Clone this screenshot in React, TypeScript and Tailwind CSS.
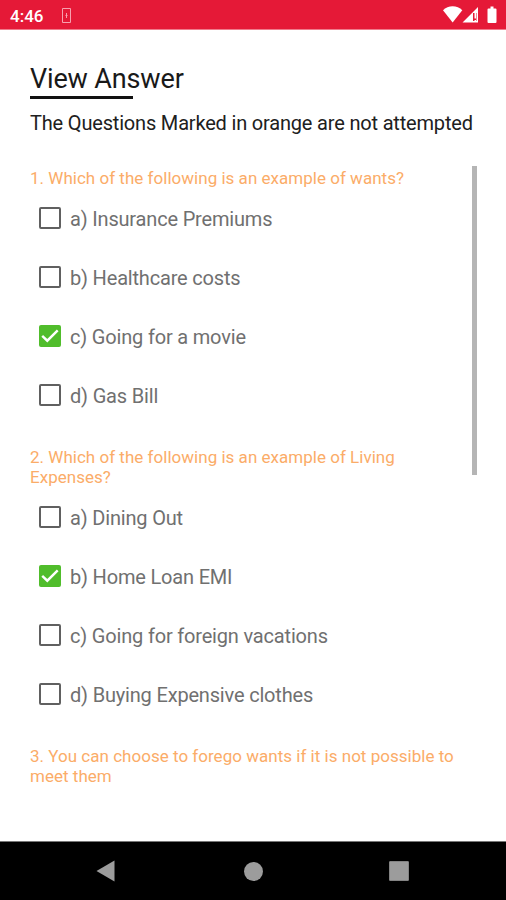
type Question = { lines: string[]; options: string[]; answer: number };

const questions: Question[] = [
  {
    lines: ['1. Which of the following is an example of wants?'],
    options: ['a) Insurance Premiums', 'b) Healthcare costs', 'c) Going for a movie', 'd) Gas Bill'],
    answer: 2,
  },
  {
    lines: ['2. Which of the following is an example of Living', 'Expenses?'],
    options: ['a) Dining Out', 'b) Home Loan EMI', 'c) Going for foreign vacations', 'd) Buying Expensive clothes'],
    answer: 1,
  },
  {
    lines: ['3. You can choose to forego wants if it is not possible to', 'meet them'],
    options: [],
    answer: -1,
  },
];

function Box({ checked }: { checked: boolean }) {
  if (!checked) return <span className="size-[22px] shrink-0 rounded-[2px] border-2 border-[#606060]" />;
  return (
    <span className="size-[22px] shrink-0 rounded-[2px] bg-[#50bd2b]">
      <svg viewBox="0 0 22 22" className="size-full" fill="none" stroke="white" strokeWidth="2.4">
        <path d="M3.2 10.8 8.3 15.7 18.7 5.3" />
      </svg>
    </span>
  );
}

function StatusBar() {
  return (
    <header className="flex h-[30px] shrink-0 items-start border-b border-[#f07b8c] bg-[#e51937] pl-[10px] pr-[8px] text-white">
      <span className="mt-[4px] w-[52px] text-[17px] font-medium leading-6">4:46</span>
      <svg className="mt-[8px]" width="9" height="15" viewBox="0 0 9 15" fill="none" stroke="#f7a0ae">
        <path d="M.5.5h8v14h-8z" />
        <path d="M4.5 5v5M3.5 7.5h2" />
      </svg>
      <svg className="ml-auto mt-[5px]" width="56" height="20" viewBox="0 0 56 20" fill="white">
        <path d="M1 5.2C6-.1 15.3-.1 20.3 5.2L10.65 17.5Z" />
        <path fillRule="evenodd" d="M20.5 17.5 36 2v15.5ZM31 8v8h3.5V8Z" />
        <path d="M32.5 8H34v5.5h-1.5zM32.5 15H34v1h-1.5z" />
        <path d="M46.5 3.5h2V1.5h3v2h2q1 0 1 1v12.5q0 1-1 1h-7q-1 0-1-1V4.5q0-1 1-1Z" />
      </svg>
    </header>
  );
}

export default function App() {
  return (
    <div className="flex h-[900px] w-[506px] flex-col overflow-hidden whitespace-nowrap bg-white font-[Roboto,'Liberation_Sans',sans-serif]">
      <StatusBar />
      <main className="flex min-h-0 flex-1 flex-col pl-[30px]">
        <h1 className="mt-[33px] h-[33px] text-[27px] leading-[33px] tracking-[-0.15px] text-[#191919]">View Answer</h1>
        <div className="h-[3px] w-[103px] bg-[#111]" />
        <p className="mt-[14px] h-[20px] text-[20px] leading-[20px] tracking-[-0.18px] text-[#202020]">
          The Questions Marked in orange are not attempted
        </p>
        <div className="mt-[33px] flex min-h-0 flex-1 justify-between">
          <div className="flex flex-col gap-[23px] pt-[2px]">
            {questions.map((q) => (
              <section key={q.lines[0]}>
                <h2 className="text-[17px] leading-[20px] tracking-[0.02px] text-[#fbac68]">
                  {q.lines.map((line) => (
                    <span key={line} className="block">{line}</span>
                  ))}
                </h2>
                <ul>
                  {q.options.map((option, i) => (
                    <li key={option} className="flex h-[59px] items-center gap-[9px] pl-[9px]">
                      <Box checked={i === q.answer} />
                      <span className="pt-[2px] text-[20px] leading-[22px] tracking-[-0.18px] text-[#707070]">{option}</span>
                    </li>
                  ))}
                </ul>
              </section>
            ))}
          </div>
          <div className="mr-[29px] h-[309px] w-[5px] bg-[#b5b5b5]" />
        </div>
      </main>
      <nav className="flex h-[59px] shrink-0 items-center border-t border-[#777] bg-black">
        <svg className="ml-[96px]" width="19" height="22" viewBox="0 0 19 22" fill="#9c9c9c">
          <path d="M.5 11 18.5.5v21Z" />
        </svg>
        <span className="ml-[129px] size-[19px] rounded-full bg-[#9c9c9c]" />
        <span className="ml-[126px] size-[20px] rounded-[1px] border border-[#838383] bg-[#9c9c9c]" />
      </nav>
    </div>
  );
}
